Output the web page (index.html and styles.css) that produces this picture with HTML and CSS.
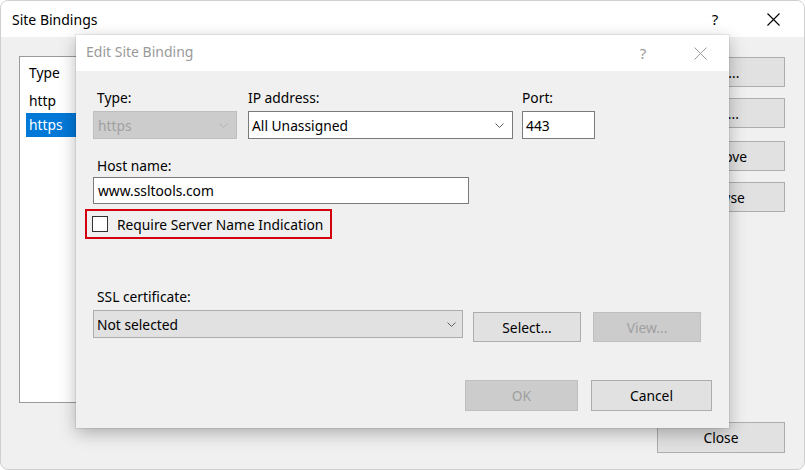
FILE: index.html
```html
<!DOCTYPE html>
<html lang="en">
<head>
<meta charset="utf-8">
<title>Site Bindings</title>
<link rel="stylesheet" href="styles.css">
</head>
<body>
<div class="window">
  <div class="titlebar">
    <span class="title">Site Bindings</span>
    <div class="caps">
      <span class="cap help">?</span>
      <span class="cap"><svg width="13" height="13" viewBox="0 0 13 13"><path d="M0.5 0.5 L12.5 12.5 M12.5 0.5 L0.5 12.5" stroke="#000" stroke-width="1.1" fill="none"/></svg></span>
    </div>
  </div>
  <div class="win-body">
    <div class="main-row">
      <div class="listview">
        <div class="lv-header">Type</div>
        <div class="lv-row">http</div>
        <div class="lv-row selected">https</div>
      </div>
      <div class="side-btns">
        <button class="btn">Add...</button>
        <button class="btn">Edit...</button>
        <button class="btn btn-gap">Remove</button>
        <button class="btn">Browse</button>
      </div>
    </div>
    <div class="footer">
      <button class="btn btn-close">Close</button>
    </div>
  </div>

  <div class="dialog">
    <div class="dlg-title">
      <span>Edit Site Binding</span>
      <div class="dlg-caps">
        <span class="cap help dim">?</span>
        <span class="cap"><svg width="13" height="13" viewBox="0 0 13 13"><path d="M0.5 0.5 L12.5 12.5 M12.5 0.5 L0.5 12.5" stroke="#9a9a9a" stroke-width="1" fill="none"/></svg></span>
      </div>
    </div>
    <div class="dlg-body">
      <div class="row1">
        <div class="col-type">
          <div class="lbl indent">Type:</div>
          <div class="combo disabled">
            <span class="val">https</span>
            <svg class="chev" width="9" height="5" viewBox="0 0 9 5"><polyline points="0.5,0.5 4.5,4.5 8.5,0.5" fill="none" stroke="#b4b4b4" stroke-width="1"/></svg>
          </div>
        </div>
        <div class="col-ip">
          <div class="lbl">IP address:</div>
          <div class="combo">
            <span class="val">All Unassigned</span>
            <svg class="chev" width="9" height="5" viewBox="0 0 9 5"><polyline points="0.5,0.5 4.5,4.5 8.5,0.5" fill="none" stroke="#606060" stroke-width="1"/></svg>
          </div>
        </div>
        <div class="col-port">
          <div class="lbl">Port:</div>
          <div class="textbox">443</div>
        </div>
      </div>

      <div class="lbl indent host-lbl">Host name:</div>
      <div class="textbox host">www.ssltools.com</div>

      <div class="sni">
        <span class="checkbox"></span>
        <span>Require Server Name Indication</span>
      </div>

      <div class="lbl indent ssl-lbl">SSL certificate:</div>
      <div class="ssl-row">
        <div class="combo ssl">
          <span class="val">Not selected</span>
          <svg class="chev" width="9" height="5" viewBox="0 0 9 5"><polyline points="0.5,0.5 4.5,4.5 8.5,0.5" fill="none" stroke="#606060" stroke-width="1"/></svg>
        </div>
        <button class="btn btn-select">Select...</button>
        <button class="btn btn-view disabled">View...</button>
      </div>

      <div class="dlg-footer">
        <button class="btn btn-ok disabled">OK</button>
        <button class="btn btn-cancel">Cancel</button>
      </div>
    </div>
  </div>
</div>
</body>
</html>
```
FILE: styles.css
```css
* { box-sizing: border-box; }
html, body { margin: 0; padding: 0; background: #fff; }
body {
  font-family: "Noto Sans", "Segoe UI", sans-serif;
  font-size: 13.8px;
  color: #000;
}
.window {
  position: relative;
  width: 805px;
  height: 470px;
  border: 1px solid #cfcfcf;
  border-radius: 8px;
  overflow: hidden;
  background: #f0f0f0;
}
.titlebar {
  height: 36px;
  background: #fff;
  display: flex;
  align-items: center;
  padding-left: 11px;
}
.title { font-size: 14px; }
.caps {
  margin-left: auto;
  display: flex;
  gap: 12px;
  margin-right: 8px;
}
.cap {
  width: 46px;
  height: 36px;
  display: flex;
  align-items: center;
  justify-content: center;
}
.help { font-size: 15px; }
.help.dim { color: #9a9a9a; }

.win-body { padding: 19px 19px 0 18px; }
.main-row {
  display: flex;
  gap: 17px;
  height: 347px;
}
.listview {
  flex: 1;
  background: #fff;
  border: 1px solid #9a9a9a;
}
.lv-header {
  height: 32px;
  line-height: 31px;
  padding-left: 9px;
}
.lv-row {
  height: 24px;
  line-height: 24px;
  padding-left: 9px;
}
.lv-row.selected {
  margin-left: 6px;
  padding-left: 3px;
  background: #0078d7;
  color: #fff;
}
.side-btns {
  width: 128px;
  display: flex;
  flex-direction: column;
  gap: 11px;
  padding-top: 1px;
}
.btn {
  height: 30px;
  padding: 0;
  margin: 0;
  background: #e1e1e1;
  border: 1px solid #adadad;
  border-radius: 0;
  font: inherit;
  color: #000;
  display: flex;
  align-items: center;
  justify-content: center;
}
.btn.disabled {
  background: #cccccc;
  border-color: #bfbfbf;
  color: #a0a0a0;
}
.btn-gap { margin-top: 2px; }
.footer {
  display: flex;
  justify-content: flex-end;
  padding-top: 19px;
}
.btn-close { width: 128px; height: 31px; }

.dialog {
  position: absolute;
  left: 75px;
  top: 34px;
  width: 653px;
  height: 393px;
  background: #f0f0f0;
  box-shadow: 0 5px 16px rgba(0, 0, 0, 0.28), 0 0 0 1px rgba(0, 0, 0, 0.07);
}
.dlg-title {
  height: 36px;
  background: #fff;
  display: flex;
  align-items: center;
  padding-left: 10px;
  padding-bottom: 3px;
  color: #9a9a9a;
  font-size: 14px;
}
.dlg-caps {
  margin-left: auto;
  display: flex;
  gap: 11px;
  margin-right: 6px;
  margin-bottom: -3px;
}
.dlg-body { padding: 18px 17px 0 17px; }

.row1 { display: flex; }
.col-type { width: 144px; }
.col-ip { width: 265px; margin-left: 11px; }
.col-port { width: 73px; margin-left: 9px; }
.lbl {
  height: 18px;
  line-height: 18px;
  margin-bottom: 4px;
  white-space: nowrap;
}
.lbl.indent { padding-left: 4px; }
.combo {
  height: 28px;
  display: flex;
  align-items: center;
  border: 1px solid #7a7a7a;
  background: #fff;
  padding: 0 8px 0 3px;
}
.combo .val { flex: 1; white-space: nowrap; }
.combo.disabled {
  background: #cccccc;
  border-color: #bfbfbf;
  color: #a0a0a0;
  padding-left: 4px;
}
.textbox {
  height: 28px;
  border: 1px solid #7a7a7a;
  background: #fff;
  padding-left: 3px;
  display: flex;
  align-items: center;
}
.host-lbl { margin-top: 18px; margin-bottom: 2px; }
.textbox.host { width: 376px; height: 27px; padding-left: 4px; }

.sni {
  margin: 5px 0 0 -8px;
  width: 247px;
  height: 30px;
  border: 2px solid #d3000e;
  display: flex;
  align-items: center;
  gap: 9px;
  padding-left: 5px;
  white-space: nowrap;
}
.checkbox {
  width: 16px;
  height: 16px;
  border: 1px solid #333;
  background: #fff;
  flex: none;
}

.ssl-lbl { margin-top: 49px; padding-left: 3px; }
.ssl-row {
  display: flex;
  align-items: flex-start;
}
.combo.ssl {
  width: 370px;
  background: #e1e1e1;
  border-color: #adadad;
  padding-right: 6px;
}
.btn-select { width: 108px; margin-left: 10px; margin-top: 2px; }
.btn-view { width: 108px; margin-left: 12px; margin-top: 2px; }

.dlg-footer {
  display: flex;
  justify-content: flex-end;
  gap: 13px;
  margin-top: 38px;
}
.btn-ok { width: 113px; height: 31px; }
.btn-cancel { width: 121px; height: 31px; }
```
